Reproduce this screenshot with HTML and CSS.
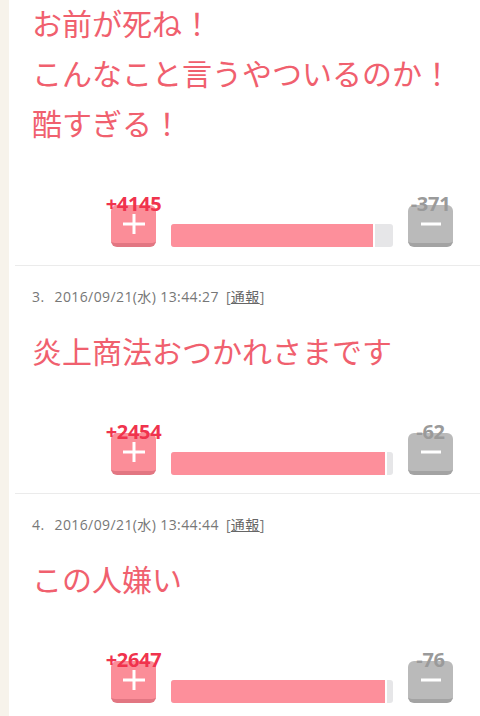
FILE: index.html
```html
<!DOCTYPE html>
<html lang="ja">
<head>
    <meta charset="UTF-8">
    <meta name="viewport" content="width=device-width, initial-scale=1.0">
    <title>コメント</title>
    <link rel="stylesheet" href="styles.css">
</head>
<body>
    <div class="page">
        <div class="list">
            <!-- 途中までスクロールされたコメント -->
            <div class="comment first">
                <p class="text">お前が死ね！<br>こんなこと言うやついるのか！<br>酷すぎる！</p>
                <div class="vote">
                    <div class="btn btn-plus">
                        <span class="count count-plus">+4145</span>
                        <svg width="22" height="20" viewBox="0 0 22 20"><rect x="9.5" y="0" width="3" height="20" fill="#fff"/><rect x="0" y="8.5" width="22" height="3" fill="#fff"/></svg>
                    </div>
                    <div class="bar"><div class="fill" style="width: 91.8%;"></div></div>
                    <div class="btn btn-minus">
                        <span class="count count-minus">-371</span>
                        <svg width="20" height="4" viewBox="0 0 20 4"><rect x="0" y="0.5" width="20" height="3" fill="#fff"/></svg>
                    </div>
                </div>
            </div>

            <div class="comment">
                <p class="meta"><span class="num">3.</span>2016/09/21(水) 13:44:27<span class="report">[<a href="#">通報</a>]</span></p>
                <p class="text">炎上商法おつかれさまです</p>
                <div class="vote">
                    <div class="btn btn-plus">
                        <span class="count count-plus">+2454</span>
                        <svg width="22" height="20" viewBox="0 0 22 20"><rect x="9.5" y="0" width="3" height="20" fill="#fff"/><rect x="0" y="8.5" width="22" height="3" fill="#fff"/></svg>
                    </div>
                    <div class="bar"><div class="fill" style="width: 97.5%;"></div></div>
                    <div class="btn btn-minus">
                        <span class="count count-minus">-62</span>
                        <svg width="20" height="4" viewBox="0 0 20 4"><rect x="0" y="0.5" width="20" height="3" fill="#fff"/></svg>
                    </div>
                </div>
            </div>

            <div class="comment">
                <p class="meta"><span class="num">4.</span>2016/09/21(水) 13:44:44<span class="report">[<a href="#">通報</a>]</span></p>
                <p class="text">この人嫌い</p>
                <div class="vote">
                    <div class="btn btn-plus">
                        <span class="count count-plus">+2647</span>
                        <svg width="22" height="20" viewBox="0 0 22 20"><rect x="9.5" y="0" width="3" height="20" fill="#fff"/><rect x="0" y="8.5" width="22" height="3" fill="#fff"/></svg>
                    </div>
                    <div class="bar"><div class="fill" style="width: 97.2%;"></div></div>
                    <div class="btn btn-minus">
                        <span class="count count-minus">-76</span>
                        <svg width="20" height="4" viewBox="0 0 20 4"><rect x="0" y="0.5" width="20" height="3" fill="#fff"/></svg>
                    </div>
                </div>
            </div>
        </div>
    </div>
</body>
</html>
```

FILE: styles.css
```css
/* リセット */
* {
    margin: 0;
    padding: 0;
    box-sizing: border-box;
}

body {
    font-family: "Open Sans", "Noto Sans CJK JP", sans-serif;
    background-color: #f7f3eb;
    height: 716px;
    overflow: hidden;
}

/* 左のベージュの帯を残して白い本文 */
.page {
    margin-left: 9px;
    padding-left: 6px;
    background-color: #fff;
    min-height: 716px;
}

.list {
    margin-top: -3px;
}

.comment {
    padding: 21px 0 18px 17px;
    border-bottom: 1px solid #ebebeb;
}

.comment.first {
    padding-top: 0;
}

.meta {
    font-size: 14px;
    line-height: 20px;
    letter-spacing: 0.4px;
    color: #777;
    margin: 0 0 18px 0;
}

.meta .num {
    margin-right: 10px;
}

.meta .report {
    margin-left: 7px;
}

.meta .report a {
    color: #666;
    text-decoration: underline;
}

.text {
    font-family: "Noto Sans CJK JP", sans-serif;
    font-size: 30px;
    line-height: 50px;
    color: #f0606e;
}

/* 投票 */
.vote {
    display: flex;
    align-items: flex-end;
    gap: 15px;
    margin: 58px 0 0 79px;
}

.btn {
    position: relative;
    width: 45px;
    height: 42px;
    border-radius: 6px;
    border-bottom: 4px solid;
    display: flex;
    align-items: center;
    justify-content: center;
}

.btn-plus {
    background-color: #fb8d98;
    border-color: #e27682;
}

.btn-minus {
    background-color: #bababa;
    border-color: #a3a3a3;
}

.count {
    position: absolute;
    top: -11px;
    left: 50%;
    transform: translateX(-50%);
    font-weight: 700;
    font-size: 20px;
    line-height: 1;
    letter-spacing: -0.3px;
    white-space: nowrap;
}

.count-plus {
    color: #f0334d;
}

.count-minus {
    color: #9a9a9a;
}

.bar {
    width: 222px;
    height: 23px;
    background-color: #e6e6e8;
    border-radius: 3px;
    overflow: hidden;
}

.fill {
    height: 100%;
    background-color: #fd8f9b;
    border-right: 2px solid #fff;
}
```
